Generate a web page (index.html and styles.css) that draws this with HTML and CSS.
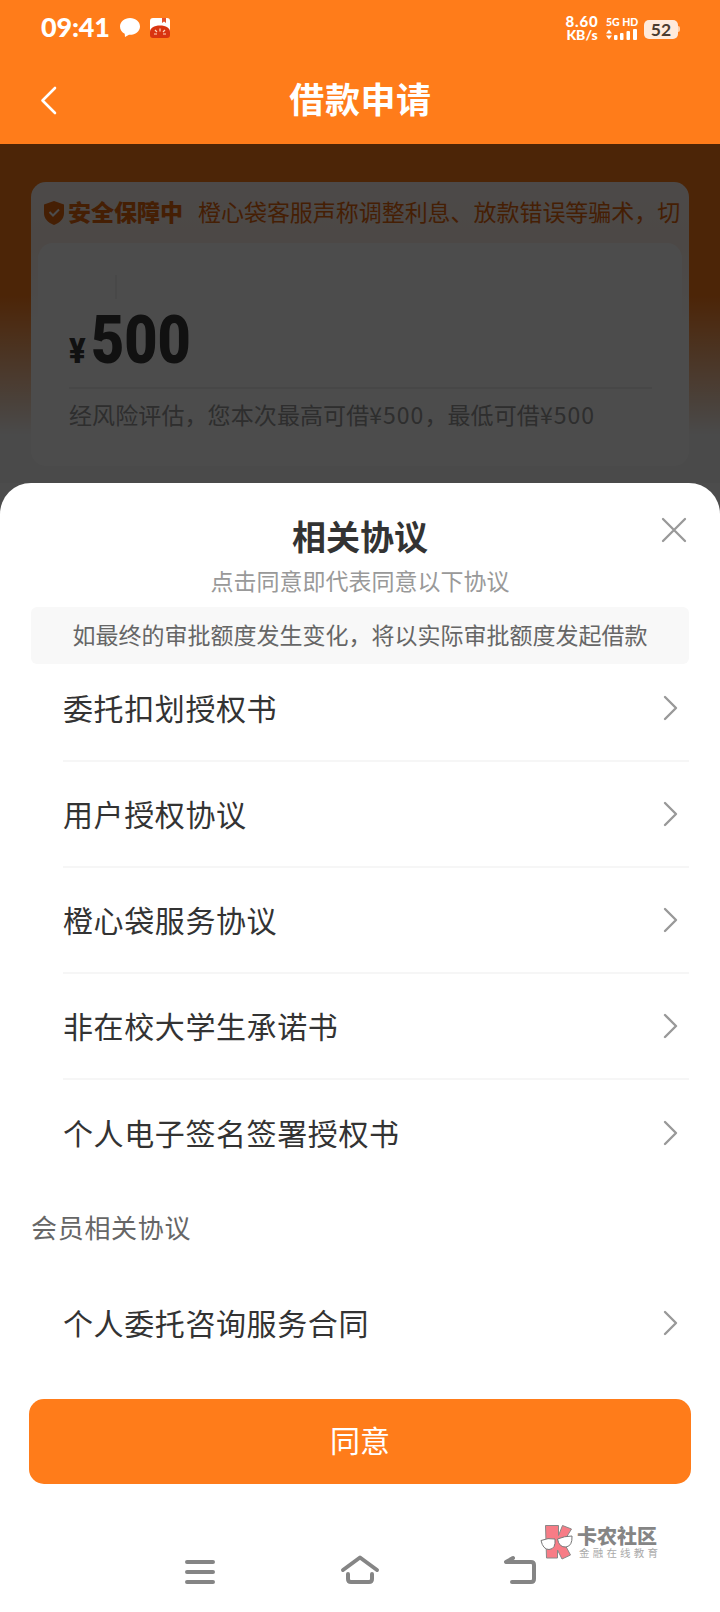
FILE: index.html
```html
<!DOCTYPE html>
<html lang="zh-CN">
<head>
  <meta charset="UTF-8" />
  <title>借款申请</title>
  <meta name="viewport" content="width=device-width, initial-scale=1.0" />
  <link rel="stylesheet" href="styles.css">
</head>
<body>
  <header class="header">
    <div class="status">
      <span class="time">09:41</span>
      <svg class="bubble" width="20" height="20" viewBox="0 0 20 20"><path d="M10 0C4.300 0 0 3.600 0 8.600c0 3.200 1.800 5.700 4.700 7.200L5 19l4-2.200c6 .400 11-3.400 11-8.400C20 3.600 15.700 0 10 0z" fill="#fff"/></svg>
      <svg class="app-icon" width="20" height="20" viewBox="0 0 20 20">
        <rect width="20" height="16" rx="3" fill="#fff"/>
        <path d="M12 0h4v5l-2-1.500L12 5z" fill="#e5532d"/>
        <path d="M0 14C0 10 4 7.500 10 7.500S20 10 20 14v3a3 3 0 0 1-3 3H3a3 3 0 0 1-3-3z" fill="#d93410"/>
        <path d="M4 16h3M5 12l2 2M10 10.500v3M15 12l-2 2M16 16h-3" stroke="#ffd9bd" stroke-width="1.200"/>
      </svg>
      <div class="speed"><span>8.60</span><span>KB/s</span></div>
      <div class="network">
        <span>5G HD</span>
        <svg width="32" height="11" viewBox="0 0 32 11" fill="#fff">
          <path d="M0 4.500L3 .500l3 4zM0 6.500h6l-3 4z"/>
          <rect x="8" y="6" width="3.500" height="5" rx="1"/><rect x="14" y="4" width="3.500" height="7" rx="1"/><rect x="20.500" y="2" width="3.500" height="9" rx="1"/><rect x="27" y="0" width="4" height="11" rx="1"/>
        </svg>
      </div>
      <div class="battery">52</div>
      <div class="battery-tip"></div>
    </div>
    <div class="navbar">
      <svg class="back" width="18" height="30" viewBox="0 0 18 30"><path d="M16 3L3.500 15.500 16 28" fill="none" stroke="#fff" stroke-width="2.600" stroke-linecap="round" stroke-linejoin="round"/></svg>
      <h1>借款申请</h1>
    </div>
  </header>

  <main class="loan">
    <div class="card">
      <div class="notice">
        <svg width="20" height="24" viewBox="0 0 20 24"><path d="M10 0l10 3.500V12c0 6-4 9.500-10 12C4 21.500 0 18 0 12V3.500z" fill="#e8690f"/><path d="M5.500 11l3.500 3.500 6-6" fill="none" stroke="#fff" stroke-width="2"/></svg>
        <b>安全保障中</b>
        <span>橙心袋客服声称调整利息、放款错误等骗术，切</span>
      </div>
      <div class="amount-box">
        <div class="mark"></div>
        <div class="amount"><span class="yen">¥</span><span class="number">500</span></div>
        <p class="range">经风险评估，您本次最高可借<span>¥500</span>，最低可借<span>¥500</span></p>
      </div>
    </div>
  </main>

  <div class="overlay">
    <section class="sheet">
      <svg class="close" width="26" height="26" viewBox="0 0 26 26"><path d="M2 2l22 22M24 2L2 24" stroke="#999" stroke-width="2.300" stroke-linecap="round"/></svg>
      <h2>相关协议</h2>
      <p class="subtitle">点击同意即代表同意以下协议</p>
      <p class="tip">如最终的审批额度发生变化，将以实际审批额度发起借款</p>
      <ul class="list">
        <li>委托扣划授权书<svg class="arrow" viewBox="0 0 16 26"><path d="M2 2l11 11L2 24"/></svg></li>
        <li>用户授权协议<svg class="arrow" viewBox="0 0 16 26"><path d="M2 2l11 11L2 24"/></svg></li>
        <li>橙心袋服务协议<svg class="arrow" viewBox="0 0 16 26"><path d="M2 2l11 11L2 24"/></svg></li>
        <li>非在校大学生承诺书<svg class="arrow" viewBox="0 0 16 26"><path d="M2 2l11 11L2 24"/></svg></li>
        <li>个人电子签名签署授权书<svg class="arrow" viewBox="0 0 16 26"><path d="M2 2l11 11L2 24"/></svg></li>
      </ul>
      <h3>会员相关协议</h3>
      <ul class="list">
        <li>个人委托咨询服务合同<svg class="arrow" viewBox="0 0 16 26"><path d="M2 2l11 11L2 24"/></svg></li>
      </ul>
      <button class="agree">同意</button>
      <nav class="system">
        <svg width="40" height="34" viewBox="0 0 40 34"><path d="M7 9h26M7 19h26M7 29h26"/></svg>
        <svg width="40" height="34" viewBox="0 0 40 34"><path d="M3 17L20 4.500 37 17M8 21v5q0 3 3 3h18q3 0 3-3v-5"/></svg>
        <svg width="40" height="34" viewBox="0 0 40 34"><path d="M13 5L6 9h25q3 0 3 3v14q0 3-3 3H12"/></svg>
      </nav>
    </section>
  </div>

  <div class="watermark">
    <svg width="34" height="36" viewBox="0 0 34 36">
      <path d="M5.500 1.500h13v10l4-10 9 3.500-8 13 7 13-8.500 4-4.500-9v8h-11z" fill="#f77c86" stroke="#888" stroke-width="1"/>
      <path d="M1 16.500q7-3 14-1.500 1 10-6 10.500-6 0-8-9zM17.500 15q7-3 14.500-3 .500 10-6 11-7 .500-8.500-8z" fill="#fff" stroke="#777" stroke-width="1"/>
    </svg>
    <div><strong>卡农社区</strong><small>金融在线教育</small></div>
  </div>
</body>
</html>
```
FILE: styles.css
```css
* {
  box-sizing: border-box;
}
body {
  margin: 0;
  height: 1612px;
  position: relative;
  overflow: hidden;
  background: #fff;
  color: #333;
  font-family: "Noto Sans CJK SC", sans-serif;
}
h1, h2, h3, p, ul {
  margin: 0;
  padding: 0;
}
svg {
  flex-shrink: 0;
}
.header {
  height: 144px;
  background: #ff7c1a;
  color: #fff;
}
.status {
  display: flex;
  align-items: center;
  height: 56px;
  padding: 0 40px 0 41px;
  font-family: Lato, sans-serif;
  font-weight: 900;
}
.time {
  width: 79px;
  font-size: 27px;
  line-height: 54px;
  margin-top: -2px;
  letter-spacing: -0.2px;
}
.app-icon {
  margin-left: 10px;
}
.speed {
  display: flex;
  flex-direction: column;
  align-items: center;
  width: 34px;
  margin-left: auto;
  font-size: 14px;
  line-height: 13px;
}
.speed span:first-child {
  font-size: 15px;
  letter-spacing: 0.8px;
}
.network {
  width: 32px;
  margin: 0 6px 0 7px;
  font-size: 10.5px;
  line-height: 10px;
  white-space: nowrap;
}
.network svg {
  display: block;
  margin-top: 2px;
}
.battery {
  width: 34px;
  height: 19px;
  margin-top: 2px;
  border-radius: 5px;
  background: #ffeadb;
  color: #4a3c30;
  font-size: 17.5px;
  font-weight: 700;
  line-height: 19px;
  text-align: center;
}
.battery-tip {
  width: 2px;
  height: 6px;
  margin-top: 2px;
  border-radius: 0 2px 2px 0;
  background: #ffd0aa;
}
.navbar {
  display: flex;
  align-items: center;
  height: 88px;
  padding: 0 56px 0 39px;
}
.navbar h1 {
  flex: 1;
  padding-bottom: 5px;
  font-size: 35px;
  line-height: 83px;
  text-align: center;
  letter-spacing: 0.6px;
  font-weight: 700;
}
.loan {
  height: 339px;
  padding: 38px 31px 0;
  background: linear-gradient(#ff7c1a 0, #ff7c1a 152px, #f7f7f7 290px);
}
.card {
  height: 284px;
  padding: 0 7px;
  border-radius: 15px;
  background: linear-gradient(#fff6f3 0, #fff1e9 60px, #fff 150px);
}
.notice {
  display: flex;
  align-items: center;
  height: 61px;
  padding-left: 6px;
  color: #e8690f;
  font-size: 23px;
  line-height: 58px;
  white-space: nowrap;
}
.notice b {
  margin: -3px 15px 0 4px;
  font-weight: 900;
}
.notice span {
  margin-top: -3px;
  letter-spacing: -0.04px;
}
.amount-box {
  height: 223px;
  padding: 32px 30px 0 31px;
  border-radius: 15px;
  background: #fff;
}
.mark {
  width: 2px;
  height: 24px;
  margin-left: 46px;
  background: #f2f2f2;
}
.amount {
  display: flex;
  align-items: baseline;
  height: 90px;
  border-bottom: 2px solid #efefef;
  color: #3a3a3a;
  font-family: Roboto, sans-serif;
  font-weight: 900;
  line-height: 84px;
}
.yen {
  width: 22px;
  font-size: 35px;
  transform: scaleX(0.88);
  transform-origin: left;
}
.number {
  font-size: 66px;
  transform: scaleX(0.87);
  transform-origin: left;
}
.range {
  margin-top: 8px;
  color: #999;
  font-size: 23px;
  line-height: 35px;
  letter-spacing: 0.1px;
  white-space: nowrap;
}
.range span {
  letter-spacing: 1px;
}
.overlay {
  position: absolute;
  top: 144px;
  right: 0;
  bottom: 0;
  left: 0;
  display: flex;
  align-items: flex-end;
  background: rgba(0, 0, 0, 0.7);
}
.sheet {
  position: relative;
  width: 100%;
  height: 1129px;
  padding: 31px 31px 0;
  border-radius: 31px 31px 0 0;
  background: #fff;
}
.close {
  position: absolute;
  top: 34px;
  right: 33px;
}
.sheet h2 {
  font-size: 34px;
  line-height: 44px;
  text-align: center;
}
.subtitle {
  margin-top: 5px;
  color: #999;
  font-size: 23px;
  line-height: 34px;
  text-align: center;
}
.tip {
  height: 57px;
  margin-top: 10px;
  border-radius: 6px;
  background: #f8f8f8;
  color: #666;
  font-size: 23px;
  line-height: 54px;
  text-align: center;
  white-space: nowrap;
}
.list {
  padding-left: 32px;
  list-style: none;
}
.list li {
  display: flex;
  align-items: center;
  justify-content: space-between;
  height: 106px;
  padding: 0 10px 3px 0;
  border-bottom: 2px solid #f6f6f6;
  font-size: 30px;
  letter-spacing: 0.6px;
}
.tip + .list {
  margin-top: -8px;
}
.list li:last-child {
  border-bottom: none;
}
.arrow {
  width: 16px;
  height: 26px;
  margin-top: 3px;
  fill: none;
  stroke: #999;
  stroke-width: 2.4;
  stroke-linecap: round;
  stroke-linejoin: round;
}
.sheet h3 {
  margin-top: 21px;
  color: #666;
  font-size: 26px;
  font-weight: 400;
  line-height: 40px;
  letter-spacing: 0.7px;
}
.sheet h3 + .list {
  margin-top: 23px;
}
.agree {
  display: block;
  width: 662px;
  height: 85px;
  margin: 23px 0 0 -2px;
  padding: 0 0 6px;
  border: none;
  border-radius: 15px;
  background: #ff7c1a;
  color: #fff;
  font-family: inherit;
  font-size: 30px;
  cursor: pointer;
}
.system {
  display: flex;
  justify-content: space-between;
  padding: 69px 149px 0;
}
.system svg {
  fill: none;
  stroke: #858585;
  stroke-width: 4;
  stroke-linecap: round;
  stroke-linejoin: round;
}
.watermark {
  position: absolute;
  top: 1524px;
  left: 540px;
  display: flex;
  gap: 3px;
}
.watermark strong, .watermark small {
  display: block;
  color: #858585;
  white-space: nowrap;
}
.watermark strong {
  font-size: 20px;
  font-weight: 900;
  line-height: 23px;
}
.watermark small {
  margin-left: 2px;
  color: #aaa;
  font-size: 10.5px;
  line-height: 12px;
  letter-spacing: 3.2px;
}
```
